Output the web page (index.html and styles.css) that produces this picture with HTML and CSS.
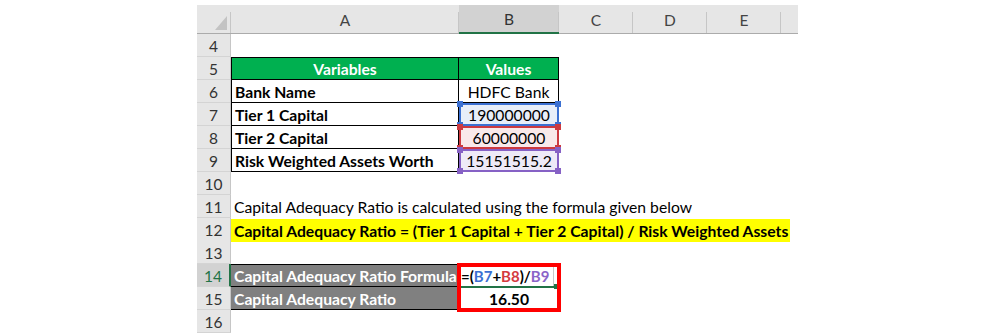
FILE: index.html
```html
<!DOCTYPE html>
<html>
<head>
<meta charset="utf-8">
<link rel="stylesheet" href="styles.css">
</head>
<body>
<div class="sheet">
  <div class="colhead">
    <div class="ch corner"><svg class="tri" width="12" height="14" viewBox="0 0 12 14"><polygon points="12,0 12,14 0,14" fill="#c3c3c3"/></svg></div>
    <div class="ch">A</div>
    <div class="ch sel">B</div>
    <div class="ch">C</div>
    <div class="ch">D</div>
    <div class="ch">E</div>
    <div class="ch end"></div>
  </div>
  <div class="row"><div class="rh">4</div></div>
  <div class="row">
    <div class="rh">5</div>
    <div class="c t ta first head">Variables</div>
    <div class="c t tb first head">Values</div>
  </div>
  <div class="row">
    <div class="rh">6</div>
    <div class="c t ta b">Bank Name</div>
    <div class="c t tb ctr">HDFC Bank</div>
  </div>
  <div class="row">
    <div class="rh">7</div>
    <div class="c t ta b">Tier 1 Capital</div>
    <div class="c t tb ctr rng blue">190000000<span class="h tl"></span><span class="h tr"></span><span class="h bl"></span><span class="h br"></span></div>
  </div>
  <div class="row">
    <div class="rh">8</div>
    <div class="c t ta b">Tier 2 Capital</div>
    <div class="c t tb ctr rng red">60000000<span class="h tl"></span><span class="h tr"></span><span class="h bl"></span><span class="h br"></span></div>
  </div>
  <div class="row">
    <div class="rh">9</div>
    <div class="c t ta b">Risk Weighted Assets Worth</div>
    <div class="c t tb ctr rng purple">15151515.2<span class="h tl"></span><span class="h tr"></span><span class="h bl"></span><span class="h br"></span></div>
  </div>
  <div class="row"><div class="rh">10</div></div>
  <div class="row">
    <div class="rh">11</div>
    <div class="c span">Capital Adequacy Ratio is calculated using the formula given below</div>
  </div>
  <div class="row">
    <div class="rh">12</div>
    <div class="c span"><span class="yellow">Capital Adequacy Ratio = (Tier 1 Capital + Tier 2 Capital) / Risk Weighted Assets</span></div>
  </div>
  <div class="row"><div class="rh">13</div></div>
  <div class="row">
    <div class="rh active">14</div>
    <div class="c gray top">Capital Adequacy Ratio Formula</div>
    <div class="c formula"><span class="k">=(</span><span class="fb">B7</span><span class="k">+</span><span class="fr">B8</span><span class="k">)/</span><span class="fp">B9</span><span class="caret"></span><span class="selline"></span><span class="selhandle"></span><span class="redbox"></span></div>
  </div>
  <div class="row">
    <div class="rh">15</div>
    <div class="c gray">Capital Adequacy Ratio</div>
    <div class="c ctr b result">16.50</div>
  </div>
  <div class="row"><div class="rh">16</div></div>
</div>
</body>
</html>
```

FILE: styles.css
```css
* { box-sizing: border-box; }
body {
  margin: 0;
  background: #ffffff;
  font-family: Lato, "Liberation Sans", sans-serif;
  color: #000;
}
.sheet {
  margin: 5px 0 0 197px;
  width: 601px;
}
.colhead,
.row {
  display: grid;
  grid-template-columns: 34px 228px 100px 74px 74px 74px 17px;
}
.colhead { height: 29px; }
.row { height: 23px; }

.ch {
  position: relative;
  display: flex;
  align-items: center;
  justify-content: center;
  font-size: 15.5px;
  color: #444;
  background: linear-gradient(#c6c6c6, #c6c6c6) right 7px / 1px 22px no-repeat, #e6e6e6;
  border-bottom: 1px solid #ababab;
  padding-top: 1px;
}
.ch.sel {
  background: linear-gradient(#c6c6c6, #c6c6c6) right 7px / 1px 22px no-repeat, #d2d2d2;
  border-bottom: 2px solid #217346;
  color: #333;
}
.ch.end { background: #e6e6e6; }
.corner { align-items: flex-end; justify-content: flex-end; padding: 0 4px 3px 0; }
.tri { display: block; }

.rh {
  background: #e6e6e6;
  border-right: 1px solid #c6c6c6;
  border-bottom: 1px solid #d4d4d4;
  display: flex;
  align-items: center;
  justify-content: center;
  font-size: 15.5px;
  color: #333;
  padding-top: 1px;
}
.rh.active {
  background: #d2d2d2;
  color: #217346;
  border-right: 2px solid #217346;
}

.c {
  position: relative;
  display: flex;
  align-items: center;
  font-size: 15.7px;
  padding: 1px 3px 0;
  white-space: nowrap;
}
.b { font-weight: 700; }
.ctr { justify-content: center; }
.t {
  border-right: 1px solid #000;
  border-bottom: 1px solid #000;
}
.ta { border-left: 1px solid #000; }
.first { border-top: 1px solid #000; }
.head {
  background: #00b050;
  color: #fff;
  font-weight: 700;
  justify-content: center;
}

.rng { border-width: 2px; border-style: solid; }
.blue { border-color: #3b70d2; background: #e8eef9; }
.red { border-color: #cc3a40; background: #f9e9ea; }
.purple { border-color: #8661c5; background: #eeeaf7; }
.h {
  position: absolute;
  width: 6px;
  height: 6px;
  z-index: 2;
}
.blue .h { background: #3b70d2; }
.red .h { background: #cc3a40; }
.purple .h { background: #8661c5; }
.h.tl { left: -4px; top: -4px; }
.h.tr { right: -4px; top: -4px; }
.h.bl { left: -4px; bottom: -4px; }
.h.br { right: -4px; bottom: -4px; }

.span { grid-column: 2 / -1; overflow: visible; }
.yellow {
  display: flex;
  align-items: center;
  width: 559px;
  height: 23px;
  margin-left: -3px;
  padding: 1px 3px 0;
  background: #ffff00;
  font-weight: 700;
}

.gray {
  background: #808080;
  color: #fff;
  font-weight: 700;
  border-bottom: 1px solid #000;
}
.gray.top { border-top: 1px solid #000; }

.formula { font-weight: 700; font-size: 15px; padding-left: 2px; }
.k { color: #000; }
.fb { color: #3b70d2; }
.fr { color: #d43a40; }
.fp { color: #8a64c8; }
.caret {
  display: inline-block;
  width: 1px;
  height: 21px;
  margin-left: 4px;
  background: #c8c8c8;
}
.selline {
  position: absolute;
  left: 1px;
  bottom: -1px;
  width: 97px;
  height: 2px;
  background: #217346;
}
.selhandle {
  position: absolute;
  right: 0;
  bottom: -2px;
  width: 5px;
  height: 5px;
  background: #217346;
}
.redbox {
  position: absolute;
  left: -2px;
  top: -1px;
  width: 104px;
  height: 49px;
  border: 4px solid #ff0000;
  z-index: 3;
}
.result { font-weight: 700; }
```
